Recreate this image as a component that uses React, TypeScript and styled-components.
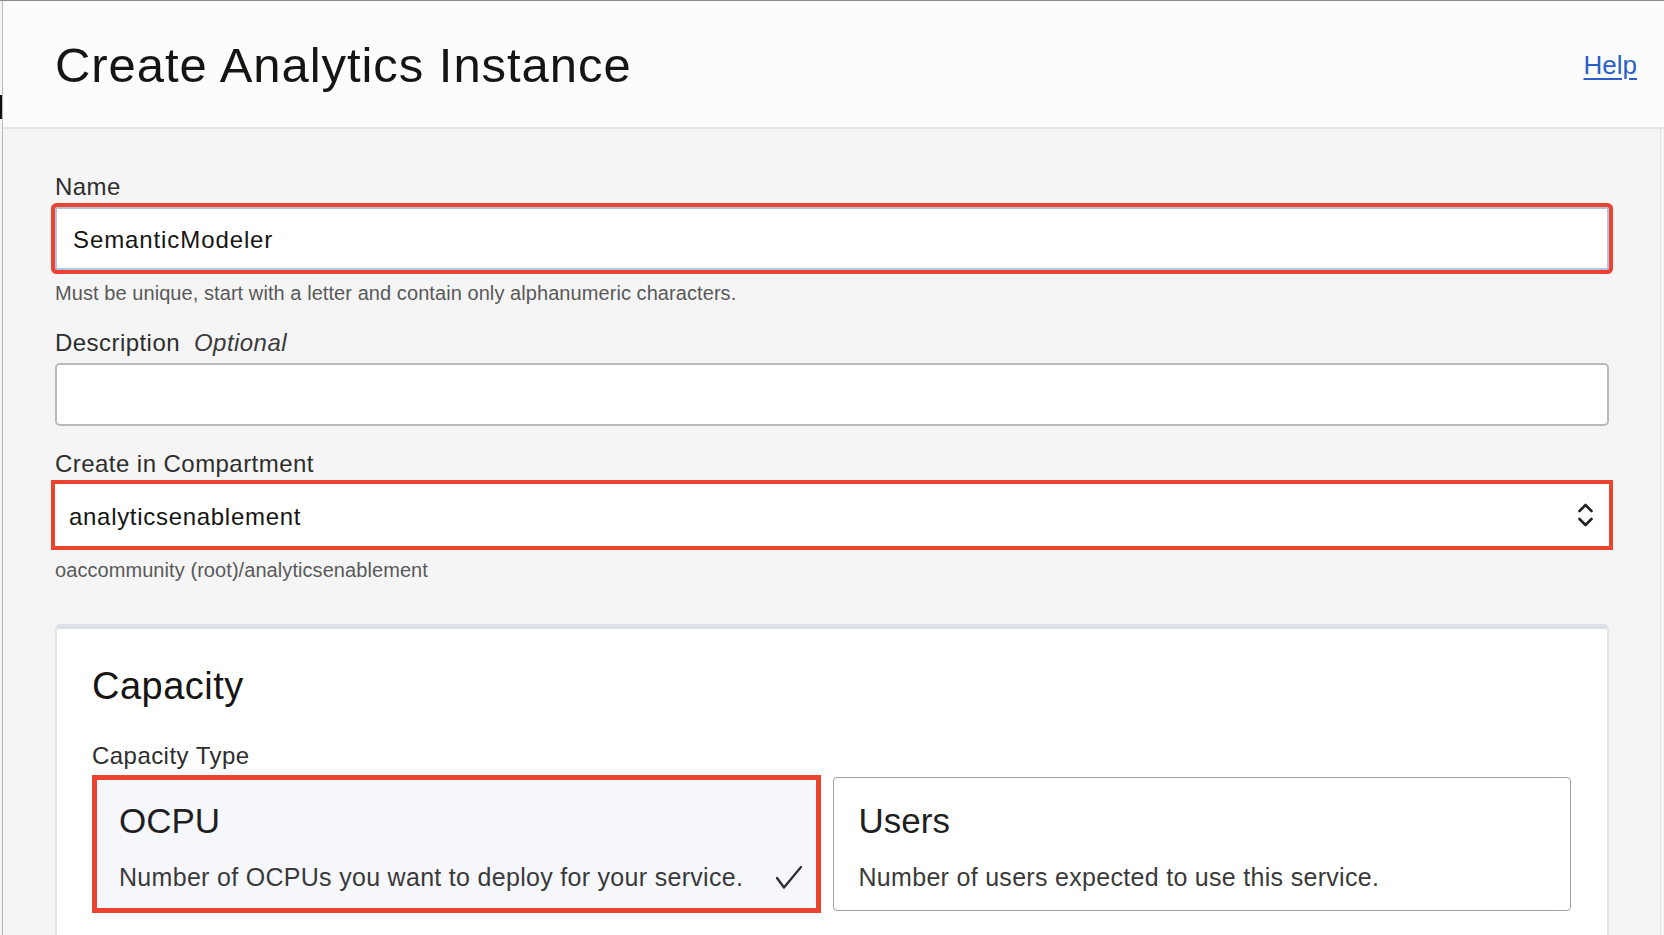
import React from "react";
import styled, { createGlobalStyle } from "styled-components";

const GlobalStyle = createGlobalStyle`
  html, body {
    margin: 0;
    padding: 0;
    background: #f5f5f5;
    height: 100%;
    overflow: hidden;
  }
  body {
    font-family: "Liberation Sans", Arial, Helvetica, sans-serif;
    color: #161513;
  }
  * { box-sizing: border-box; }
`;

const RED = "#ea4430";

const Outer = styled.div`
  position: relative;
  height: 935px;
  padding-left: 2px;
  border-top: 1px solid #8a8a8a;
  background: #f5f5f5;

  &::before {
    content: "";
    position: absolute;
    left: 0;
    top: 94px;
    width: 2px;
    height: 24px;
    background: #111;
  }
`;

const Frame = styled.div`
  height: 100%;
  border-left: 1px solid #b9b9b9;
  display: flex;
  flex-direction: column;
`;

const Header = styled.header`
  height: 128px;
  flex: none;
  display: flex;
  align-items: center;
  justify-content: space-between;
  padding: 1px 27px 0 52px;
  background: #fcfcfc;
  border-bottom: 2px solid #e4e4e4;
`;

const Title = styled.h1`
  margin: 0;
  font-size: 49px;
  line-height: 56px;
  font-weight: 400;
  letter-spacing: 0.95px;
  color: #161513;
`;

const HelpLink = styled.a`
  font-size: 26px;
  line-height: 30px;
  color: #2a5fc8;
  text-decoration: underline;
  text-underline-offset: 4px;
  text-decoration-thickness: 1.5px;
  cursor: pointer;
`;

const Body = styled.main`
  flex: 1;
  margin-right: 3px;
  border-right: 1px solid #e0e0e0;
  padding: 44px 51px 0 52px;
  overflow: hidden;
`;

const Form = styled.div`
  display: flex;
  flex-direction: column;
  gap: 24px;
`;

const Field = styled.div`
  display: flex;
  flex-direction: column;
`;

const Label = styled.label`
  font-size: 24px;
  line-height: 28px;
  letter-spacing: 0.45px;
  color: #2e2e2e;
`;

const Optional = styled.span`
  font-style: italic;
  margin-left: 14px;
  color: #3a3a3a;
`;

const TextInput = styled.input<{ $highlight?: boolean }>`
  margin-top: 6px;
  height: 63px;
  width: 100%;
  padding: 2px 16px 0;
  font-family: inherit;
  font-size: 24px;
  letter-spacing: 0.9px;
  color: #161513;
  background: #fff;
  border: 2px solid ${(p) => (p.$highlight ? "#b3c3e3" : "#b7bbbf")};
  border-radius: ${(p) => (p.$highlight ? "2px" : "5px")};
  box-shadow: ${(p) => (p.$highlight ? `0 0 0 4px ${RED}` : "none")};
  outline: none;
`;

const SelectBox = styled.div<{ $highlight?: boolean }>`
  margin-top: 6px;
  height: 62px;
  display: flex;
  align-items: center;
  justify-content: space-between;
  padding: 3px 14px 0 12px;
  background: #fff;
  border: 2px solid ${(p) => (p.$highlight ? "#ffffff" : "#b7bbbf")};
  box-shadow: ${(p) => (p.$highlight ? `0 0 0 4px ${RED}` : "none")};
  font-size: 24px;
  letter-spacing: 0.7px;
  color: #161513;
  cursor: pointer;

  svg {
    margin-top: -3px;
  }
`;

const Helper = styled.div<{ $gap: number }>`
  margin-top: ${(p) => p.$gap}px;
  font-size: 20px;
  line-height: 24px;
  letter-spacing: 0.07px;
  color: #595959;
`;

const Card = styled.section`
  margin-top: 42px;
  min-height: 400px;
  background: #fff;
  border: 2px solid #e2e5e8;
  border-top: 5px solid #dde1e5;
  border-bottom: none;
  border-radius: 5px 5px 0 0;
  padding: 35px 36px 0 35px;
`;

const CardTitle = styled.h2`
  margin: 0;
  font-size: 38px;
  line-height: 44px;
  font-weight: 400;
  letter-spacing: 0.5px;
  color: #161513;
`;

const SubLabel = styled(Label)`
  display: block;
  margin-top: 34px;
`;

const TileGrid = styled.div`
  margin-top: 5px;
  display: grid;
  grid-template-columns: 729fr 738fr;
  align-items: start;
  gap: 12px;
`;

const Tile = styled.div<{ $selected?: boolean }>`
  height: ${(p) => (p.$selected ? "138px" : "134px")};
  margin-top: ${(p) => (p.$selected ? "0" : "2px")};
  display: flex;
  flex-direction: column;
  background: ${(p) => (p.$selected ? "#f6f7fb" : "#ffffff")};
  border: ${(p) => (p.$selected ? `5px solid ${RED}` : "1.5px solid #9da2a7")};
  border-radius: ${(p) => (p.$selected ? "0" : "4px")};
  padding: ${(p) =>
    p.$selected ? "21px 14px 0 22px" : "22.5px 14px 0 24.5px"};
  cursor: pointer;
`;

const TileTitle = styled.div`
  font-size: 35px;
  line-height: 40px;
  color: #1f1f1f;
`;

const TileRow = styled.div`
  margin-top: 21px;
  display: flex;
  align-items: center;
  justify-content: space-between;
`;

const TileText = styled.div`
  font-size: 25px;
  line-height: 30px;
  letter-spacing: 0.3px;
  color: #3a3a3a;
`;

const Chevrons = () => (
  <svg width="15" height="26" viewBox="0 0 15 26" fill="none" aria-hidden>
    <polyline
      points="1.5,9 7.5,3 13.5,9"
      stroke="#222"
      strokeWidth="2.6"
      strokeLinecap="round"
      strokeLinejoin="round"
    />
    <polyline
      points="1.5,17 7.5,23 13.5,17"
      stroke="#222"
      strokeWidth="2.6"
      strokeLinecap="round"
      strokeLinejoin="round"
    />
  </svg>
);

const Check = () => (
  <svg width="26" height="23" viewBox="0 0 26 23" fill="none" aria-hidden>
    <polyline
      points="1,12 8,21.5 25,1"
      stroke="#2e2e2e"
      strokeWidth="2.3"
      strokeLinecap="round"
      strokeLinejoin="round"
    />
  </svg>
);

export default function App() {
  return (
    <>
      <GlobalStyle />
      <Outer>
        <Frame>
          <Header>
            <Title>Create Analytics Instance</Title>
            <HelpLink>Help</HelpLink>
          </Header>
          <Body>
            <Form>
              <Field>
                <Label>Name</Label>
                <TextInput $highlight defaultValue="SemanticModeler" />
                <Helper $gap={11}>
                  Must be unique, start with a letter and contain only
                  alphanumeric characters.
                </Helper>
              </Field>
              <Field>
                <Label>
                  Description<Optional>Optional</Optional>
                </Label>
                <TextInput />
              </Field>
              <Field>
                <Label>Create in Compartment</Label>
                <SelectBox $highlight role="combobox">
                  <span>analyticsenablement</span>
                  <Chevrons />
                </SelectBox>
                <Helper $gap={12}>oaccommunity (root)/analyticsenablement</Helper>
              </Field>
            </Form>
            <Card>
              <CardTitle>Capacity</CardTitle>
              <SubLabel>Capacity Type</SubLabel>
              <TileGrid>
                <Tile $selected>
                  <TileTitle>OCPU</TileTitle>
                  <TileRow>
                    <TileText>
                      Number of OCPUs you want to deploy for your service.
                    </TileText>
                    <Check />
                  </TileRow>
                </Tile>
                <Tile>
                  <TileTitle>Users</TileTitle>
                  <TileRow>
                    <TileText>Number of users expected to use this service.</TileText>
                  </TileRow>
                </Tile>
              </TileGrid>
            </Card>
          </Body>
        </Frame>
      </Outer>
    </>
  );
}
